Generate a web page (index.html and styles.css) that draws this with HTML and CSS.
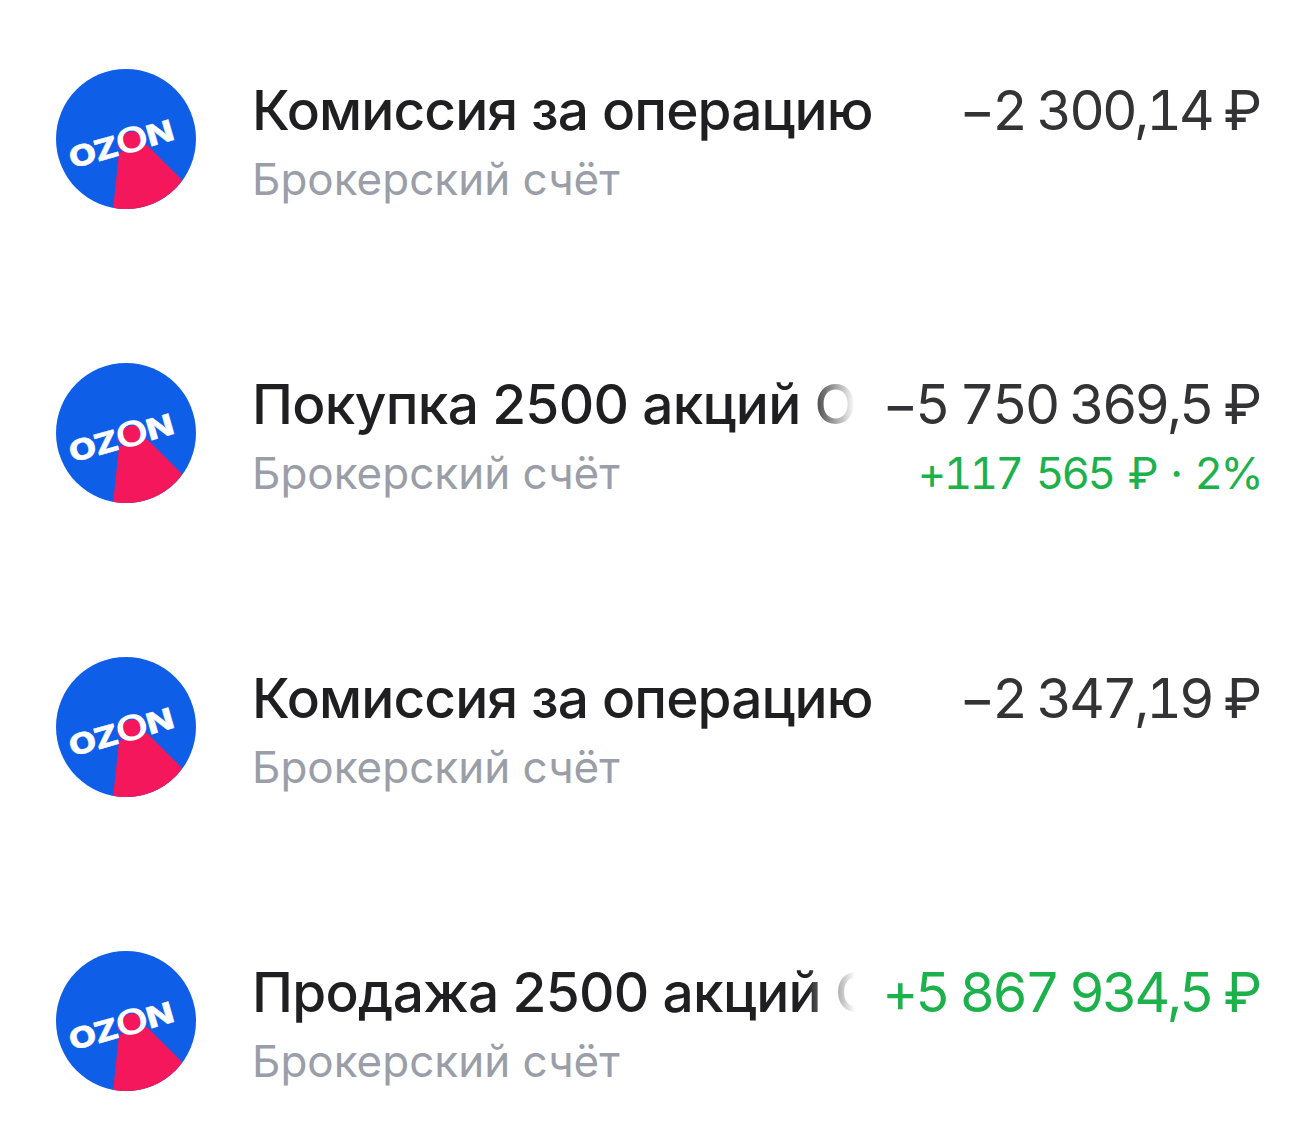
FILE: index.html
```html
<!DOCTYPE html>
<html>
<head>
  <meta charset="utf-8">
  <link rel="stylesheet" href="styles.css">
  <title>Операции</title>
</head>
<body>
  <svg class="defs" width="0" height="0">
    <symbol id="ozon" viewBox="0 0 140 140">
      <circle cx="70" cy="70" r="70" fill="#0f5ee8"/>
      <clipPath id="round"><circle cx="70" cy="70" r="70"/></clipPath>
      <polygon points="63,84 91,76 126,111 100,150 56,150" fill="#f4175c" clip-path="url(#round)"/>
      <ellipse cx="75" cy="73" rx="14" ry="10" transform="rotate(-16 75 73)" fill="#f4175c"/>
      <text class="logo-text" text-anchor="middle" transform="translate(68 85) rotate(-16) scale(1.22 1)">O<tspan dx="-1">Z</tspan><tspan class="logo-big" dx="-1" dy="1">O</tspan><tspan dx="-1" dy="-1">N</tspan></text>
    </symbol>
  </svg>

  <div class="list">
    <div class="row">
      <svg class="logo"><use href="#ozon"/></svg>
      <div class="main">
        <div class="title">Комиссия за операцию</div>
        <div class="sub">Брокерский счёт</div>
      </div>
      <div class="side">
        <div class="amount">−2 300,14 ₽</div>
      </div>
    </div>

    <div class="row">
      <svg class="logo"><use href="#ozon"/></svg>
      <div class="main">
        <div class="title fade">Покупка 2500 акций Ozon</div>
        <div class="sub">Брокерский счёт</div>
      </div>
      <div class="side">
        <div class="amount">−5 750 369,5 ₽</div>
        <div class="extra">+117 565 ₽ · 2%</div>
      </div>
    </div>

    <div class="row">
      <svg class="logo"><use href="#ozon"/></svg>
      <div class="main">
        <div class="title">Комиссия за операцию</div>
        <div class="sub">Брокерский счёт</div>
      </div>
      <div class="side">
        <div class="amount">−2 347,19 ₽</div>
      </div>
    </div>

    <div class="row">
      <svg class="logo"><use href="#ozon"/></svg>
      <div class="main">
        <div class="title fade">Продажа 2500 акций Ozon</div>
        <div class="sub">Брокерский счёт</div>
      </div>
      <div class="side">
        <div class="amount plus">+5 867 934,5 ₽</div>
      </div>
    </div>
  </div>
</body>
</html>
```

FILE: styles.css
```css
body {
  margin: 0;
  background-color: #fff;
  font-family: "Inter", Arial, sans-serif;
}

.defs {
  display: block;
}

.list {
  display: flex;
  flex-direction: column;
  gap: 154px;
  padding: 69px 54px 0 56px;
}

.row {
  display: flex;
  height: 140px;
}

.logo {
  flex: none;
  width: 140px;
  height: 140px;
  margin-right: 56px;
}

.logo-text {
  font-family: "Inter", sans-serif;
  font-size: 29px;
  font-weight: 800;
  fill: #fff;
  stroke: #fff;
  stroke-width: 0.4;
}

.logo-big {
  font-size: 35px;
  font-weight: 600;
  stroke-width: 0;
}

.main {
  width: 603px;
  flex: none;
}

.title {
  font-size: 55px;
  font-weight: 500;
  line-height: 70px;
  letter-spacing: -0.9px;
  margin-top: 6px;
  color: #1f1f21;
  white-space: nowrap;
}

.fade {
  overflow: hidden;
  letter-spacing: -0.7px;
  -webkit-mask-image: linear-gradient(to right, #000 555px, transparent 603px);
  mask-image: linear-gradient(to right, #000 555px, transparent 603px);
}

.sub {
  font-size: 44px;
  line-height: 68px;
  color: #9a9ea8;
  white-space: nowrap;
}

.side {
  flex: 1;
  text-align: right;
  white-space: nowrap;
}

.amount {
  font-size: 55px;
  line-height: 70px;
  letter-spacing: -3px;
  font-feature-settings: "tnum";
  margin-top: 6px;
  padding-right: 3px;
  color: #333335;
}

.amount.plus {
  color: #1cb14a;
}

.extra {
  font-size: 44px;
  line-height: 68px;
  letter-spacing: -2.6px;
  word-spacing: 5px;
  font-feature-settings: "tnum";
  padding-right: 1px;
  color: #1cb14a;
}
```
